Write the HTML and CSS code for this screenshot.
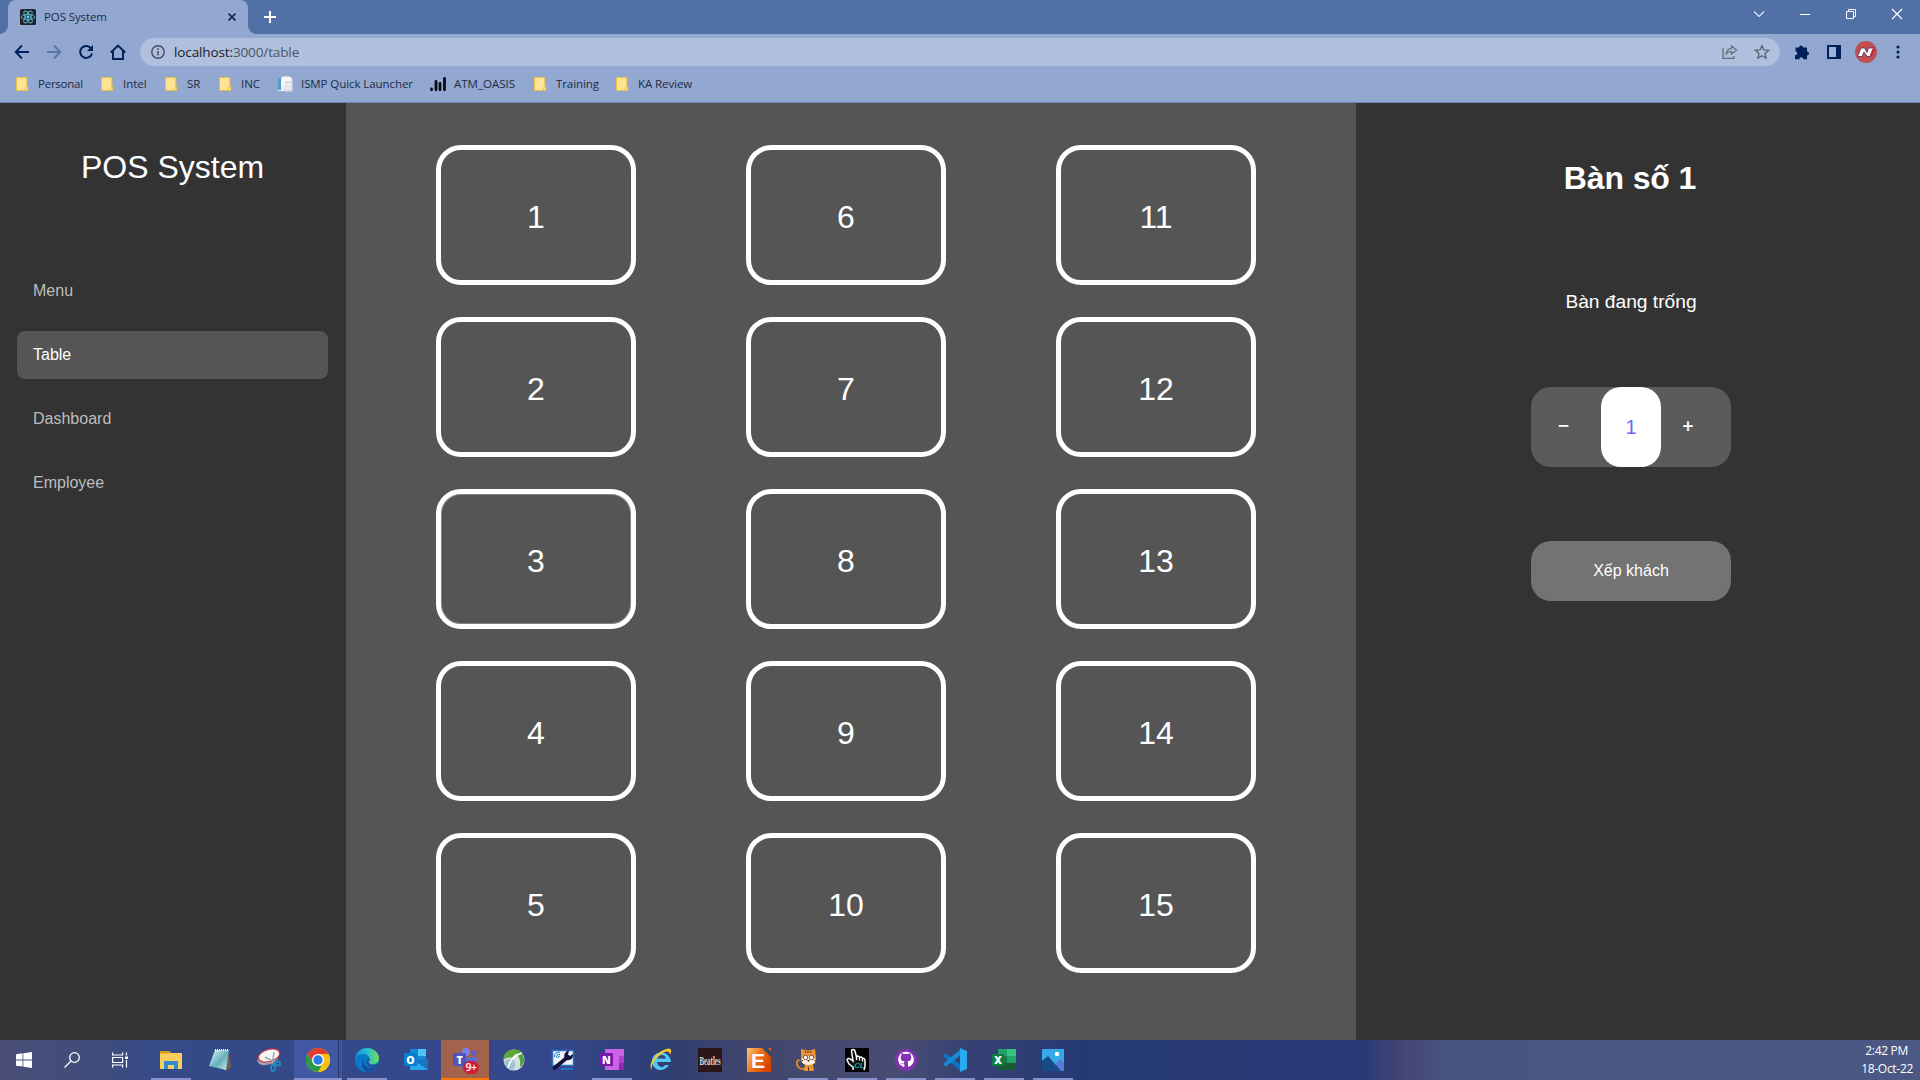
FILE: index.html
```
<!DOCTYPE html>
<html lang="vi">
<head>
<meta charset="utf-8">
<title>POS System</title>
<link rel="stylesheet" href="styles.css">
</head>
<body>
<svg class="defs" width="0" height="0" aria-hidden="true">
  <symbol id="folder" viewBox="0 0 16 16"><path d="M.5 1.500h10.400v9.200h1v3.800H.5z" fill="#ffe593" stroke="#e8bc45"/><path d="M9.500 14.300v-3.200h2" fill="none" stroke="#e8bc45" stroke-width=".8"/></symbol>
</svg>
<div class="screen">
  <header class="browser">
    <div class="tabstrip">
      <div class="tab">
        <svg width="16" height="16" viewBox="0 0 16 16"><rect width="16" height="16" rx="1.500" fill="#202329"/><g fill="none" stroke="#5ab5cd" stroke-width=".9"><ellipse cx="8" cy="8" rx="6.700" ry="2.600"/><ellipse cx="8" cy="8" rx="6.700" ry="2.600" transform="rotate(60 8 8)"/><ellipse cx="8" cy="8" rx="6.700" ry="2.600" transform="rotate(120 8 8)"/></g><circle cx="8" cy="8" r="1.400" fill="#61dafb"/></svg>
        <span class="tab-title">POS System</span>
        <svg class="tab-close" width="8" height="8" viewBox="0 0 8 8"><path d="M.5.5l7 7M7.500.5l-7 7" stroke="#1c2740" stroke-width="1.600"/></svg>
      </div>
      <svg class="new-tab" width="12" height="12" viewBox="0 0 12 12"><path d="M6 0v12M0 6h12" stroke="#fff" stroke-width="2"/></svg>
      <div class="window-buttons">
        <svg width="46" height="28" viewBox="0 0 46 28"><path d="M18 11.500l5 5 5-5" fill="none" stroke="#e6ecf7" stroke-width="1.100"/></svg>
        <svg width="46" height="28" viewBox="0 0 46 28"><path d="M18 14.500h10" stroke="#fff"/></svg>
        <svg width="46" height="28" viewBox="0 0 46 28"><path d="M18.500 11.500h7v7h-7zM20.500 11.500v-2h7v7h-2" fill="none" stroke="#fff"/></svg>
        <svg width="46" height="28" viewBox="0 0 46 28"><path d="M18 9l10 10M28 9l-10 10" stroke="#fff" stroke-width="1.200"/></svg>
      </div>
    </div>
    <div class="toolbar">
      <svg class="nav-icon" viewBox="0 0 16 16"><path d="M15 8H2.500M8 1.500L1.700 8 8 14.500" fill="none" stroke="#00205b" stroke-width="1.900"/></svg>
      <svg class="nav-icon" viewBox="0 0 16 16"><path d="M1 8h12.500M8 1.500L14.300 8 8 14.500" fill="none" stroke="#5a75ab" stroke-width="1.900"/></svg>
      <svg class="nav-icon" viewBox="0 0 16 16"><path d="M13.300 4.700A6 6 0 1 0 14 9.500" fill="none" stroke="#00205b" stroke-width="2"/><path d="M15 1v6H9z" fill="#00205b"/></svg>
      <svg class="nav-icon" viewBox="0 0 16 16"><path d="M3 7v8h10V7M.8 8.500L8 1.500l7.200 7" fill="none" stroke="#00205b" stroke-width="1.900"/></svg>
      <div class="omnibox">
        <svg width="14" height="14" viewBox="0 0 14 14"><circle cx="7" cy="7" r="6.200" fill="none" stroke="#454d5b" stroke-width="1.400"/><path d="M7 6v4.500M7 3.300V5" stroke="#454d5b" stroke-width="1.500"/></svg>
        <span class="url">localhost:<span class="url-path">3000/table</span></span>
        <svg class="share" width="16" height="14" viewBox="0 0 16 14"><path d="M1 3v10.300h11V11" fill="none" stroke="#626a76" stroke-width="1.200"/><path d="M9.500 1l5 4-5 4V6.500c-3 0-4.500 1-5.500 3 .2-3.500 2-5.700 5.500-6z" fill="none" stroke="#626a76" stroke-width="1.100"/></svg>
        <svg width="16" height="16" viewBox="0 0 16 16"><path d="M8 1.700l1.900 4.200 4.600.5-3.400 3.100.9 4.500-4-2.300L4 14l.9-4.500-3.400-3.100 4.600-.5z" fill="none" stroke="#5d6573" stroke-width="1.400"/></svg>
      </div>
      <div class="actions">
        <svg width="16" height="16" viewBox="0 0 16 16"><path d="M1.500 3.500H5a2 2 0 1 1 4 0h4v4a2 2 0 1 1 0 4v3.700H9.300a2 2 0 0 0-4 0H1v-4a2 2 0 0 0 .5-4z" fill="#00205b"/></svg>
        <svg width="14" height="14" viewBox="0 0 14 14"><path fill="#00205b" d="M0 0h14v14H0z"/><path fill="#9fb3da" d="M2 2h7v10H2z"/></svg>
        <svg width="22" height="22" viewBox="0 0 22 22"><circle cx="11" cy="11" r="11" fill="#c0504f"/><path d="M2.500 15.500L6 7h3.700l2.300 4.500L13.500 7h6l-3.500 8.500h-3.800L9 11l-1.800 4.500z" fill="#fff" stroke="#402b69" stroke-width=".8"/><path d="M17.500 7.500h2l-3.400 8H14.500z" fill="#cf1f35"/></svg>
        <svg width="4" height="14" viewBox="0 0 4 14" fill="#00205b"><circle cx="2" cy="2" r="1.600"/><circle cx="2" cy="7" r="1.600"/><circle cx="2" cy="12" r="1.600"/></svg>
      </div>
    </div>
    <nav class="bookmarks">
      <a class="bm bm-personal"><svg class="bm-icon"><use href="#folder"/></svg><span>Personal</span></a>
      <a class="bm bm-intel"><svg class="bm-icon"><use href="#folder"/></svg><span>Intel</span></a>
      <a class="bm bm-sr"><svg class="bm-icon"><use href="#folder"/></svg><span>SR</span></a>
      <a class="bm bm-inc"><svg class="bm-icon"><use href="#folder"/></svg><span>INC</span></a>
      <a class="bm bm-ismp"><svg class="bm-icon" viewBox="0 0 16 16"><path d="M1 2h10v13H1z" fill="#e9eef3"/><path d="M1 2h3v12H1z" fill="#5b9bcb"/><path d="M5 .5h8l2 2V10H5z" fill="#f8f8f8"/><path d="M8 5h7.500v10.500H8z" fill="#dde0e5"/><path d="M9 8.500h5M9 12h5" stroke="#fff"/></svg><span>ISMP Quick Launcher</span></a>
      <a class="bm bm-atm"><svg class="bm-icon" viewBox="0 0 16 16"><path d="M1.500 13v.800M6 5.500v8.300M10 7.500v6.300M14.500 2.500v11.300" stroke="#080b12" stroke-width="2.800" stroke-linecap="round"/></svg><span>ATM_OASIS</span></a>
      <a class="bm bm-training"><svg class="bm-icon"><use href="#folder"/></svg><span>Training</span></a>
      <a class="bm bm-ka"><svg class="bm-icon"><use href="#folder"/></svg><span>KA Review</span></a>
    </nav>
  </header>

  <div class="app">
    <aside class="sidebar">
      <div class="brand">POS System</div>
      <a class="menu-item">Menu</a>
      <a class="menu-item active">Table</a>
      <a class="menu-item">Dashboard</a>
      <a class="menu-item">Employee</a>
    </aside>
    <main class="tables">
      <div class="table-card">1</div><div class="table-card">2</div><div class="table-card hovered">3</div><div class="table-card">4</div><div class="table-card">5</div>
      <div class="table-card">6</div><div class="table-card">7</div><div class="table-card">8</div><div class="table-card">9</div><div class="table-card">10</div>
      <div class="table-card">11</div><div class="table-card">12</div><div class="table-card">13</div><div class="table-card">14</div><div class="table-card">15</div>
    </main>
    <section class="detail">
      <h2 class="detail-title">Bàn số 1</h2>
      <p class="detail-status">Bàn đang trống</p>
      <div class="stepper"><span class="step">−</span><span class="count">1</span><span class="step">+</span></div>
      <div class="assign">Xếp khách</div>
    </section>
  </div>

  <footer class="taskbar">
    <div class="sys"><svg width="16" height="16" viewBox="0 0 16 16" fill="#fff"><path d="M0 2.300L6.500 1.300v6.200H0zM7.300 1.200L16 0v7.500H7.300zM0 8.400h6.500v6.200L0 13.700zM7.300 8.400H16V16l-8.700-1.200z"/></svg></div>
    <div class="sys"><svg width="16" height="16" viewBox="0 0 16 16" fill="none" stroke="#fff" stroke-width="1.300"><circle cx="10.500" cy="5.500" r="4.800"/><path d="M7 9L.5 15.500"/></svg></div>
    <div class="sys"><svg width="16" height="16" viewBox="0 0 16 16" fill="none" stroke="#fff" stroke-width="1.200"><path d="M.6.500V3h10V.5M.6 15.500V13h10v2.500M.6 5.500h10v5H.6zM14.500.5v3M14.500 8v7.500"/><path d="M13 4.500h3v2.500h-3z" fill="#fff" stroke="none"/></svg></div>
    <div class="task running explorer"><svg viewBox="0 0 24 24"><path d="M1 3h9l2 2h11v16H1z" fill="#f8cf5f"/><path d="M1 3h9l1.500 2.500H1z" fill="#d79b16"/><path d="M5 13h14v8H5z" fill="#328bd2"/><path d="M9 17h6v4H9z" fill="#f8cf5f"/></svg></div>
    <div class="task"><svg viewBox="0 0 24 24"><defs><linearGradient id="pad" x2="1" y2="1"><stop stop-color="#e9fafa"/><stop offset=".55" stop-color="#64aeba"/><stop offset="1" stop-color="#d4f1f0"/></linearGradient></defs><path d="M20 2l3 17-5 4z" fill="#71604d"/><path d="M7 2h14l-3 20L1 18z" fill="url(#pad)"/><path d="M7 2h14" stroke="#f7f7f0" stroke-width="2" stroke-dasharray="1 1"/></svg></div>
    <div class="task"><svg viewBox="0 0 24 24"><ellipse cx="11" cy="10" rx="11" ry="6.500" transform="rotate(-20 11 10)" fill="#a4a1b6"/><ellipse cx="12" cy="7.500" rx="11" ry="6" transform="rotate(-16 12 7.500)" fill="#f6f6f6" stroke="#d23038" stroke-width="1.200"/><path d="M8 9l11 6M17 4l-2 14" stroke="#a0a5ad" stroke-width="1.500"/><g fill="none" stroke="#2588b9" stroke-width="1.900"><ellipse cx="20.500" cy="15.500" rx="3" ry="2"/><ellipse cx="16" cy="20" rx="2" ry="3"/></g></svg></div>
    <div class="task active-task"><svg viewBox="0 0 24 24"><circle cx="12" cy="12" r="12" fill="#fbc116"/><path d="M12 12L6.800 15 1.600 6A12 12 0 0 1 22.400 6H12z" fill="#e33b2e"/><path d="M1.600 6l5.200 9A6 6 0 0 0 12 18h5.200L12 24A12 12 0 0 1 1.600 6z" fill="#269b48"/><path d="M12 24l5.200-9A6 6 0 0 0 17 8.500L15.500 6h6.900A12 12 0 0 1 12 24z" fill="#fbc116"/><circle cx="12" cy="12" r="6" fill="#fff"/><circle cx="12" cy="12" r="4.700" fill="#277be8"/></svg></div>
    <div class="task running"><svg viewBox="0 0 24 24"><defs><linearGradient id="edge"><stop stop-color="#168cd5"/><stop offset=".5" stop-color="#27bfd2"/><stop offset="1" stop-color="#70df52"/></linearGradient></defs><circle cx="12" cy="12" r="12" fill="#087bc9"/><path d="M0 11C1 3.500 6 0 12 0c7 0 12 5 12 10 0 5-4 7-8 6-3-.8-2-2-1.500-4C15 8 12 6 8.500 6 4.500 6 1.200 8 0 11z" fill="url(#edge)"/><path d="M9 11c-2 6 3 11 13 7-3 5-7 6-10 6-5-2-7-9-3-13z" fill="#174f9e"/><path d="M14.500 11c-4 2-2 6 2 6.800 3 .4 5 .2 7-1" stroke="#32478b" stroke-width="1.800" fill="none"/></svg></div>
    <div class="task"><svg viewBox="0 0 24 24"><path d="M6 1h16v16H6z" fill="#1688d4"/><path d="M14 1h8v7h-8z" fill="#4bc6f0"/><path d="M6 11h18v11H6z" fill="#28a8ea"/><path d="M24 11v11L8 11z" fill="#1677bd"/><path d="M0 5h13v13H0z" fill="#087ed0"/><text class="glyph" x="6.500" y="15.500">O</text></svg></div>
    <div class="task teams"><svg viewBox="0 0 24 24"><circle cx="13" cy="4" r="4" fill="#7b83eb"/><circle cx="21" cy="5" r="2.700" fill="#5b62c7"/><path d="M6 9h18v7c0 5-8 6-14 6z" fill="#6269c8"/><path d="M0 5h13v13H0z" fill="#4e55bc"/><text class="glyph" x="6.500" y="15.500">T</text></svg><span class="badge">9+</span></div>
    <div class="task"><svg viewBox="0 0 24 24"><circle cx="12" cy="12" r="10.500" fill="#d8dfdf"/><path d="M1.500 12C1 5 7 1 13 1.500c4 .3 6 2 7 3.500-4-1-8 1-10 5-2-1-6-.5-8.500 2z" fill="#5aa936"/><path d="M11 2c7 0 12 5 11 12-1 3-3 5-4 5 1-7-1-12-7-17z" fill="#4fa53a"/><path d="M2 14c4-4 9-4 11 0 1 3 0 5-2 8-5 0-8-4-9-8z" fill="#9cc4d1"/><path d="M6 20c2-8 6-13 14-15" stroke="#fff" stroke-width="1.500" fill="none"/></svg></div>
    <div class="task"><svg viewBox="0 0 24 24"><path d="M1.500 2.500h21v15h-21z" fill="#e9f3f8" stroke="#2d72bd" stroke-width="1.500"/><path d="M10 20h12v2H10z" fill="#2672ca"/><path d="M3 9a6 6 0 0 1 6-5M5 9.500a4 4 0 0 1 4-3.500M7 10a2 2 0 0 1 2-2" stroke="#267ac0" fill="none"/><path d="M3.500 20L15 10.500" stroke="#16123c" stroke-width="3.600" stroke-linecap="round"/><path d="M18 2.500l-1 4 2 1.500 3-2c.5 4-2.500 7-6.500 6-4-2.500-2.500-8.500 2.500-9.500z" fill="#16123c"/></svg></div>
    <div class="task running"><svg viewBox="0 0 24 24"><path d="M5 1h19v21H5z" fill="#ca63e6"/><path d="M19 8h5v7h-5z" fill="#ae42cb"/><path d="M19 15h5v7h-5z" fill="#9029a9"/><path d="M0 5h13v13H0z" fill="#7719aa"/><text class="glyph" x="6.500" y="15.500">N</text></svg></div>
    <div class="task"><svg viewBox="0 0 24 24"><path d="M20 17c-6 9-17 5-17-4 0-11 18-12 19 1H8c1 6 7 6 8 3z" fill="#54c6f4"/><path d="M8.500 10.500h8.500c-1-5-8-4.500-8.500 0z" fill="#31447f"/><path d="M3 22C-2 18 6 4 17 1c6-2 6 2 4 6 0-5-5-4-9-1C6 10 1 19 3 22z" fill="#f5c92e"/></svg></div>
    <div class="task"><svg viewBox="0 0 24 24"><path d="M0 0h24v24H0z" fill="#2b1719"/><g transform="translate(12 17) scale(.58 1)"><text class="beatles">Beatles</text></g></svg></div>
    <div class="task"><svg viewBox="0 0 24 24"><defs><linearGradient id="ed" x2="1" y2=".5"><stop stop-color="#ffc77c"/><stop offset=".5" stop-color="#ed761d"/><stop offset="1" stop-color="#d74400"/></linearGradient></defs><path d="M0 0h24v24H0z" fill="url(#ed)"/><path d="M15 0h6l3 4v5z" fill="#34476f"/><text class="big-e" x="11" y="20">E</text></svg></div>
    <div class="task running"><svg viewBox="0 0 24 24"><path d="M9 21C1 22 0 15 1.500 13c0-1 1.500-1 2 0" stroke="#e38321" stroke-width="2" fill="none"/><path d="M5 1l4 1h6l4-1 1 8-1 6-2 1 1 7H8l1-7-4-3z" fill="#ef9332"/><ellipse cx="12.500" cy="12.500" rx="7.200" ry="4.500" fill="#fff0d5"/><path d="M12 2v3M9 3l1 2M15 3l-1 2M5 13l2-.5M20 13l-2-.5M12.500 19v4" stroke="#593719"/><circle cx="9.500" cy="9.500" r="2.200" fill="#fff" stroke="#43301f" stroke-width=".8"/><circle cx="15.500" cy="9.500" r="2.200" fill="#fff" stroke="#43301f" stroke-width=".8"/><path d="M11 12h3l-1.500 2z" fill="#43301f"/></svg></div>
    <div class="task running"><svg viewBox="0 0 24 24"><path d="M0 0h24v24H0z" fill="#000"/><path d="M8 22v-3l-4-3-2-4c0-2 2-2 4-.5L8 13 6.500 3c0-2 3-2 3.500 0l1.500 6c1-1.500 2.500-1 3 .500 1-1 2.500-.5 3 1 1.500-.5 2.500.5 2.500 2v6l-1 3.500" fill="#111" stroke="#fff" stroke-width="1.500"/><path d="M11.500 9v3M14.500 9.500v3M17.500 10.500v3" stroke="#fff" stroke-width="1.300"/><text class="cl" x="9" y="19.500">CL</text></svg></div>
    <div class="task running"><svg viewBox="0 0 24 24"><circle cx="12" cy="12" r="11" fill="#8432b1"/><path d="M10 19v-2.500c-2.500 0-3-1.500-4-2 1.500-.8 2.500 1 4 .5.100-.7.300-1.100.7-1.500-2.500-.3-4-1.500-4-4 0-1 .3-1.700.9-2.300-.2-.7-.1-1.500.1-2 1 0 1.700.5 2.300.9h4c.6-.4 1.300-.9 2.300-.9.2.5.3 1.300.1 2 .6.600.9 1.300.9 2.300 0 2.500-1.500 3.700-4 4 .5.500.7 1 .7 2V19A7.800 7.800 0 1 0 10 19z" fill="#fff" fill-rule="evenodd"/><path d="M10 18.500v-2c-2.500.2-3-1.500-4-2 1.500-.8 2.500 1 4 .5" fill="none" stroke="#fff"/><path d="M9 6c-2.500 1-3 6 .5 7h5C18 12 17.500 7 15 6l-1 1h-4z" fill="#8432b1"/></svg></div>
    <div class="task running"><svg viewBox="0 0 24 24"><path d="M1 7l2-1.500L19 18v6L1 9z" fill="#0877c5"/><path d="M1 17l2 1.500L19 6V0L1 15z" fill="#168ad3"/><path d="M17 0l7 3v18l-7 3z" fill="#28a9f0"/></svg></div>
    <div class="task running"><svg viewBox="0 0 24 24"><path d="M6 1h18v21H6z" fill="#21a366"/><path d="M15 1h9v7h-9z" fill="#37c481"/><path d="M6 8h9v7H6z" fill="#107c41"/><path d="M6 15h18v7H6z" fill="#185c37"/><path d="M0 6h12v12H0z" fill="#107c41"/><text class="glyph" x="6" y="16">X</text></svg></div>
    <div class="task running"><svg viewBox="0 0 24 24"><path d="M1 1h22v22H1z" fill="#36a9e8"/><path d="M14 17l5-6 4 4v8h-9z" fill="#527bd3"/><path d="M1 13l6-5 13 15H1z" fill="#164b88"/><circle cx="16" cy="6" r="2.200" fill="#fff"/></svg></div>
    <div class="clock"><span class="time">2:42 PM</span><span class="date">18-Oct-22</span></div>
  </footer>
</div>
</body>
</html>
```
FILE: styles.css
```
* { box-sizing: border-box; }
body { margin: 0; font-family: "Liberation Sans", Arial, sans-serif; color: #fff; overflow: hidden; }
svg { display: block; flex: none; }
.defs { position: absolute; }
.screen { width: 1920px; height: 1080px; display: flex; flex-direction: column; }

/* Browser frame */
.browser { height: 103px; background: #92a8d1; border-bottom: 1px solid #6c84b9; font-family: "Open Sans", "Noto Sans", sans-serif; font-size: 12px; color: #1f2a44; }
.tabstrip { height: 34px; background: #5070a6; display: flex; padding-left: 8px; }
.tab { position: relative; width: 240px; height: 34px; padding: 0 12px; background: #92a8d1; border-radius: 8px 8px 0 0; display: flex; align-items: center; }
.tab::before, .tab::after { content: ""; position: absolute; bottom: 0; width: 8px; height: 8px; }
.tab::before { left: -8px; background: radial-gradient(circle at 0 0, transparent 7.500px, #92a8d1 8px); }
.tab::after { right: -8px; background: radial-gradient(circle at 100% 0, transparent 7.500px, #92a8d1 8px); }
.tab-title { margin-left: 8px; padding-bottom: 2px; font-size: 11.500px; letter-spacing: -.1px; }
.tab-close { margin-left: auto; }
.new-tab { margin: 11px 0 0 16px; }
.window-buttons { display: flex; margin-left: auto; }

.toolbar { height: 36px; padding-top: 4px; display: flex; align-items: flex-start; }
.nav-icon { width: 16px; height: 16px; margin: 6px 0 0 14px; }
.nav-icon + .nav-icon { margin-left: 16px; }
.omnibox { width: 1640px; height: 28px; margin-left: 14px; padding: 0 10px 0 11px; border-radius: 14px; background: #afbfdd; display: flex; align-items: center; }
.url { margin-left: 9px; font-size: 13.500px; letter-spacing: -.12px; color: #202124; }
.url-path { color: #4c5564; }
.share { margin: 0 16px 0 auto; }
.actions { display: flex; align-items: center; height: 28px; margin-left: 14px; gap: 16px; }
.actions svg:nth-child(2) { margin-left: 1px; }
.actions svg:nth-child(3) { margin-left: -2px; }
.actions svg:nth-child(4) { margin-left: 3px; }

.bookmarks { height: 28px; padding-left: 16px; display: flex; align-items: center; }
.bm { display: flex; align-items: center; white-space: nowrap; font-size: 11.500px; }
.bm span { padding-bottom: 1px; }
.bm-icon { width: 16px; height: 16px; margin-right: 6px; }
.bm-personal { width: 85px; letter-spacing: -.25px; }
.bm-intel { width: 64px; }
.bm-sr { width: 54px; }
.bm-inc { width: 58px; }
.bm-ismp { width: 153px; }
.bm-atm { width: 104px; }
.bm-training { width: 82px; }
.bm-ismp .bm-icon, .bm-atm .bm-icon { margin-right: 8px; }
.bm-ismp, .bm-ka, .bm-training { letter-spacing: -.08px; }

/* Point of sale app */
.app { height: 937px; display: flex; background: #333; }
.sidebar { width: 346px; padding: 0 18px 0 17px; display: flex; flex-direction: column; gap: 16px; }
.brand { height: 132px; padding-top: 46px; margin-bottom: 16px; text-align: center; font-size: 32px; line-height: 37px; }
.menu-item { height: 48px; padding: 0 16px; border-radius: 8px; font-size: 16px; line-height: 48px; color: #bdbdbd; }
.menu-item.active { background: #555; color: #fff; }
.tables { width: 1010px; padding: 42px 0 0 90px; background: #555; display: grid; grid-template-columns: repeat(3, 200px); grid-template-rows: repeat(5, 140px); grid-auto-flow: column; column-gap: 110px; row-gap: 32px; align-content: start; }
.table-card { border: 5px solid #fff; border-radius: 25px; display: flex; align-items: center; justify-content: center; font-size: 32px; line-height: 37px; padding-top: 5px; }
.table-card.hovered { box-shadow: inset 0 0 0 1px #858585; }
.detail { flex: 1; padding-right: 14px; display: flex; flex-direction: column; align-items: center; }
.detail-title { margin: 57px 2px 0 0; font-size: 32px; line-height: 37px; letter-spacing: -.1px; }
.detail-status { margin: 94px 0 0; font-size: 19.200px; line-height: 22px; }
.stepper { width: 200px; height: 80px; margin-top: 74px; border-radius: 20px; background: #5b5b5b; display: flex; align-items: center; justify-content: space-between; }
.step { width: 70px; padding: 0 9px 2px 0; font-family: "Open Sans", sans-serif; font-size: 20px; font-weight: 600; line-height: 28px; text-align: center; }
.step:first-child { padding-right: 5px; }
.step:last-child { padding-right: 16px; }
.count { width: 60px; height: 80px; border-radius: 20px; background: #fff; color: #7166f5; font-size: 20px; line-height: 80px; text-align: center; }
.assign { width: 200px; height: 60px; margin-top: 74px; border-radius: 20px; background: #737373; font-size: 16px; line-height: 59px; text-align: center; }

/* Taskbar */
.taskbar { height: 40px; display: flex; background: linear-gradient(90deg, #484e76 0, #414d7b 90px, #354a87 150px, #34478c 550px, #2d3e72 665px, #40466d 745px, #484c72 900px, #354174 970px, #263a72 1080px, #273976 1360px, #464675 1405px, #485580 1450px, #4b5883 1920px); }
.sys { width: 48px; display: flex; align-items: center; justify-content: center; }
.task { position: relative; width: 49px; padding-right: 1px; display: flex; align-items: center; justify-content: center; }
.task svg { width: 24px; height: 24px; }
.explorer { margin-left: 3px; }
.running::after { content: ""; position: absolute; left: 4px; bottom: 0; width: 40px; height: 2px; background: #8791cb; }
.active-task { background: linear-gradient(90deg, #4058a3 44px, #293967 44px, #293967 45px, #41569a 45px, #41569a 48px, transparent 48px); }
.active-task::after { content: ""; position: absolute; left: 0; bottom: 0; width: 48px; height: 2px; background: #8791cb; }
.teams { background: linear-gradient(90deg, #a2624b 48px, transparent 48px); }
.teams::after { content: ""; position: absolute; left: 0; bottom: 0; width: 48px; height: 2px; background: #ff7600; }
.badge { position: absolute; left: 22px; top: 21px; width: 16px; height: 13px; border-radius: 7px; background: #d31b3c; font: 600 10.500px/12px "Open Sans", sans-serif; letter-spacing: -.4px; text-align: center; }
.glyph { font: 800 10.500px "Open Sans", sans-serif; fill: #fff; text-anchor: middle; }
.beatles { font: 700 12px "Liberation Serif", serif; fill: #ddd8d5; text-anchor: middle; }
.big-e { font: 700 21px "Liberation Sans", sans-serif; fill: #fff; text-anchor: middle; }
.cl { font: italic 700 8px "Liberation Sans", sans-serif; fill: #15a9a5; }
.clock { margin-left: auto; padding: 2px 7px 0 0; width: 74px; display: flex; flex-direction: column; align-items: flex-end; font: 12px/18px "Open Sans", "Noto Sans", sans-serif; white-space: nowrap; letter-spacing: -.3px; }
.time { padding-right: 5px; }
```
